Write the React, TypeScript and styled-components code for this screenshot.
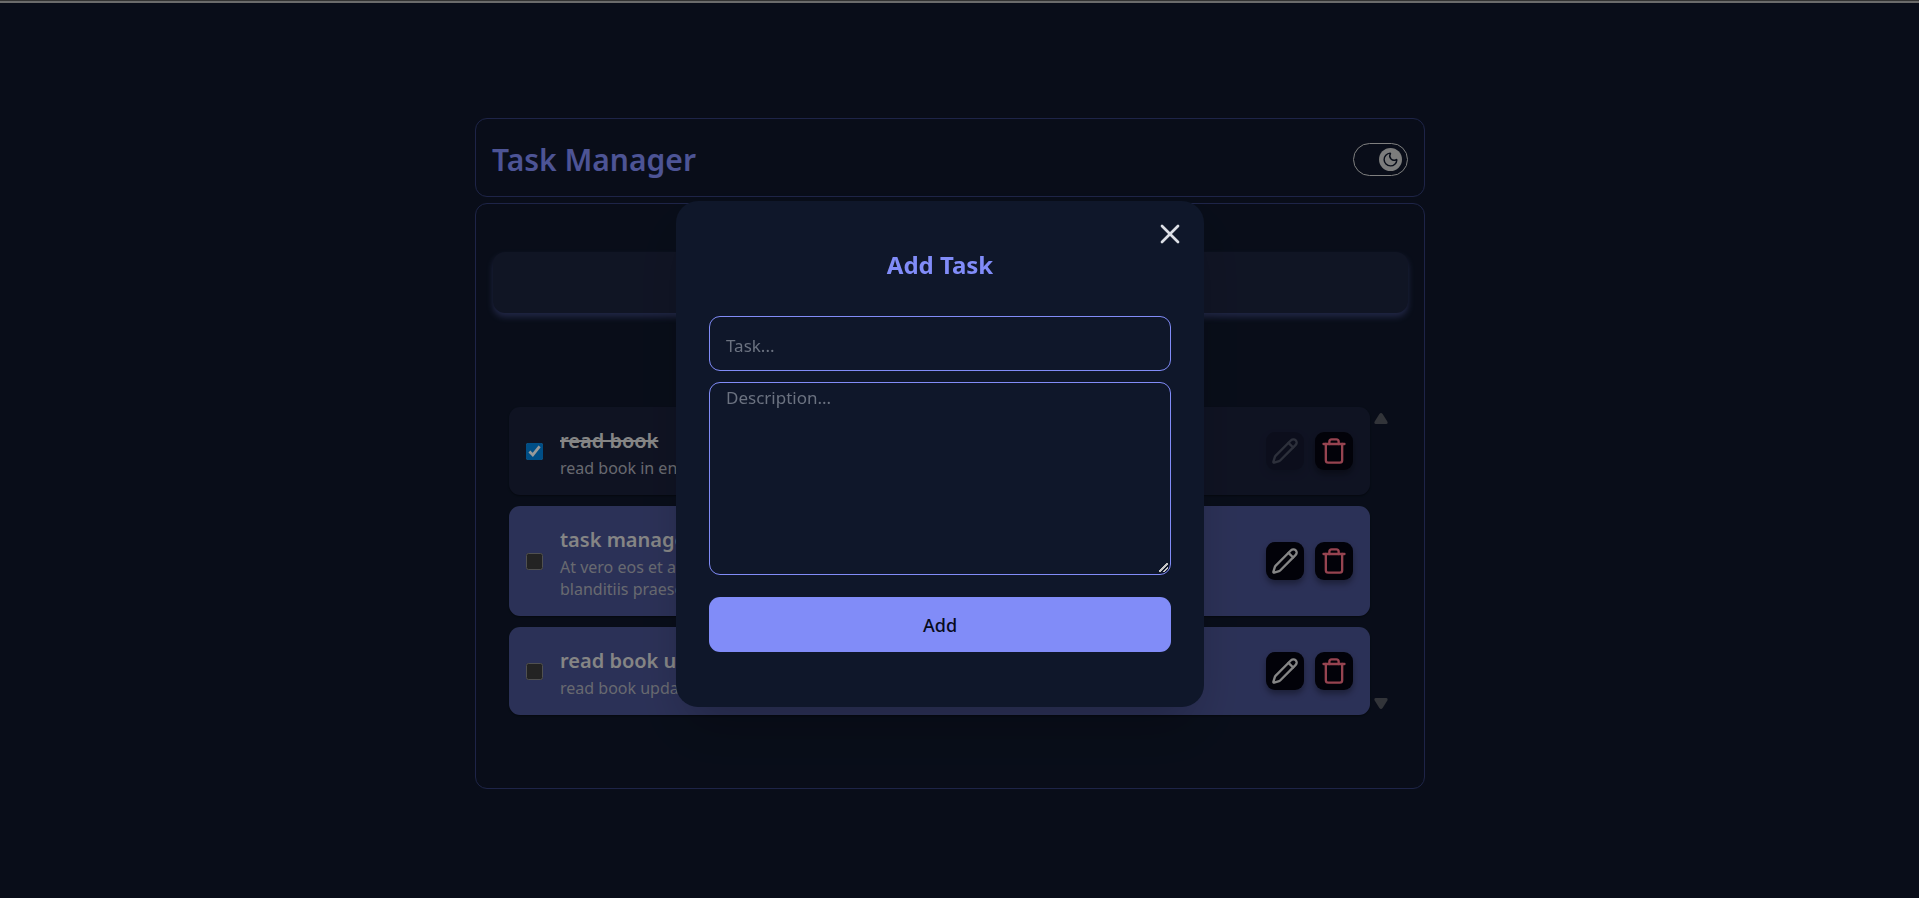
import React, { useState } from "react";
import styled, { createGlobalStyle } from "styled-components";
import { Moon, Pencil, Trash, X } from "lucide-react";

const GlobalStyle = createGlobalStyle`
  *, *::before, *::after { box-sizing: border-box; }
  html { color-scheme: dark; }
  body {
    margin: 0;
    background: #0f172a;
    color: #dedede;
    font-family: "Segoe UI", "Noto Sans", sans-serif;
    font-size: 16px;
  }
  h1, h2, h3, p, ul { margin: 0; padding: 0; }
  button, input, textarea { font: inherit; }
`;

const TopEdge = styled.div`
  position: fixed;
  inset: 0 0 auto;
  z-index: 3;
  height: 3px;
  border-top: 1px solid #333333;
  background: #6b6b6b;
`;

const Page = styled.main`
  min-height: 100vh;
  display: flex;
  flex-direction: column;
  align-items: center;
  justify-content: center;
  gap: 6px;
  padding: 9px 19px 0 0;
`;

const Frame = styled.div`
  width: 50%;
  min-width: 640px;
  border: 1px solid #333d78;
  border-radius: 12px;
`;

const Header = styled(Frame)`
  display: flex;
  align-items: center;
  justify-content: space-between;
  padding: 18px 16px 14px;
`;

const Heading = styled.h1`
  color: #818cf8;
  font-size: 30px;
  line-height: 45px;
  font-weight: 600;
`;

const ThemeToggle = styled.button`
  display: flex;
  align-items: center;
  justify-content: flex-end;
  width: 55px;
  height: 33px;
  padding: 0 5px;
  border: 1px solid #d4d4d4;
  border-radius: 17px;
  background: transparent;
`;

const Knob = styled.span`
  display: grid;
  place-items: center;
  width: 23px;
  height: 23px;
  border-radius: 50%;
  background: #cfcfcf;
  color: #0f172a;
`;

const Board = styled(Frame)`
  display: flex;
  flex-direction: column;
  gap: 94px;
  padding: 48px 16px 73px 17px;
`;

const NewTaskBar = styled.div`
  height: 61px;
  border-radius: 12px;
  background: #1c233d;
  box-shadow: 0 4px 6px 0 rgba(129, 140, 248, 0.35);
`;

const ListArea = styled.div`
  display: flex;
  gap: 4px;
  padding: 0 20px 0 16px;
`;

const List = styled.ul`
  flex: 1;
  display: flex;
  flex-direction: column;
  gap: 11px;
  list-style: none;
`;

const Card = styled.li<{ $done: boolean }>`
  display: flex;
  align-items: center;
  gap: 17px;
  padding: 0 17px;
  border-radius: 11px;
  background: ${(p) => (p.$done ? "#1a203a" : "#495291")};
  box-shadow: 0 1px 2px rgba(0, 0, 0, 0.4);
`;

const Tick = styled.input`
  width: 17px;
  height: 17px;
  margin: 0;
  accent-color: #0083e0;
`;

const TaskText = styled.label`
  flex: 1;
  padding: 20px 0 16px;
`;

const TaskTitle = styled.h3<{ $done: boolean }>`
  margin-bottom: 2px;
  font-size: 20px;
  line-height: 28px;
  font-weight: 600;
  text-decoration: ${(p) => (p.$done ? "line-through" : "none")};
`;

const TaskNote = styled.p`
  max-width: 500px;
  line-height: 22px;
  color: #adb0bb;
`;

const Actions = styled.div`
  display: flex;
  gap: 11px;
`;

const IconButton = styled.button<{ $danger?: boolean }>`
  display: grid;
  place-items: center;
  width: 38px;
  height: 38px;
  padding: 0;
  border: 0;
  border-radius: 9px;
  background: #04040f;
  color: ${(p) => (p.$danger ? "#fb7085" : "#dedede")};
  box-shadow: 0 4px 6px rgba(0, 0, 0, 0.35);

  &:disabled { opacity: 0.25; }
`;

const Scroller = styled.div`
  display: flex;
  flex-direction: column;
  justify-content: space-between;
  width: 14px;
  padding: 6px 0;
`;

const ScrollArrow = styled.button`
  display: block;
  height: 11px;
  padding: 0;
  border: 0;
  background: none;
  color: #54575f;

  svg { display: block; }
`;

const Overlay = styled.div`
  position: fixed;
  inset: 0;
  z-index: 2;
  display: flex;
  align-items: center;
  justify-content: center;
  padding: 10px 39px 0 0;
  background: rgba(0, 0, 0, 0.4);
`;

const Modal = styled.section`
  position: relative;
  width: 90%;
  max-width: 528px;
  padding: 48px 33px 55px;
  border-radius: 22px;
  background: #0f172a;
  box-shadow: 0 25px 50px -12px rgba(0, 0, 0, 0.25);
`;

const CloseButton = styled.button`
  position: absolute;
  top: 17px;
  right: 18px;
  display: grid;
  padding: 0;
  border: 0;
  background: none;
  color: #dcdfe6;
`;

const ModalTitle = styled.h2`
  margin-bottom: 35px;
  color: #818cf8;
  font-size: 24px;
  line-height: 32px;
  font-weight: 700;
  text-align: center;
`;

const Form = styled.form`
  display: flex;
  flex-direction: column;
`;

const TaskField = styled.input`
  height: 55px;
  margin-bottom: 11px;
  padding: 3px 16px 0;
  border: 1px solid #818cf8;
  border-radius: 11px;
  background: transparent;
  font-size: 17px;

  &::placeholder { color: #6b7280; }
`;

const DescriptionField = styled.textarea`
  height: 193px;
  margin-bottom: 22px;
  padding: 2px 16px;
  border: 1px solid #818cf8;
  border-radius: 11px;
  background: transparent;
  font-size: 17px;
  line-height: 26px;
  resize: vertical;

  &::placeholder { color: #6b7280; }

  &::-webkit-resizer {
    background: linear-gradient(
        135deg,
        transparent 44%,
        #c4c4c4 44% 58%,
        transparent 58% 70%,
        #c4c4c4 70% 82%,
        transparent 82%
      )
      right 2px bottom 2px / 9px 9px no-repeat;
  }
`;

const AddButton = styled.button`
  height: 55px;
  border: 0;
  border-radius: 11px;
  background: #818cf8;
  color: #070b1c;
  font-size: 18px;
  font-weight: 500;
`;

type Task = { title: string; note: string; done: boolean };

const initialTasks: Task[] = [
  { title: "read book", note: "read book in english", done: true },
  {
    title: "task manager",
    note: "At vero eos et accusamus et iusto odio dignissimos ducimus qui blanditiis praesentium voluptatum",
    done: false,
  },
  { title: "read book update", note: "read book update", done: false },
];

export default function App() {
  const [tasks, setTasks] = useState(initialTasks);
  const [open, setOpen] = useState(true);

  const toggle = (index: number) =>
    setTasks(tasks.map((t, i) => (i === index ? { ...t, done: !t.done } : t)));

  return (
    <>
      <GlobalStyle />
      <TopEdge />
      <Page>
        <Header as="header">
          <Heading>Task Manager</Heading>
          <ThemeToggle type="button" aria-label="Dark theme">
            <Knob>
              <Moon size={17} strokeWidth={2} />
            </Knob>
          </ThemeToggle>
        </Header>
        <Board>
          <NewTaskBar />
          <ListArea>
            <List>
              {tasks.map((task, i) => (
                <Card key={task.title} $done={task.done}>
                  <Tick
                    type="checkbox"
                    id={`task-${i}`}
                    checked={task.done}
                    onChange={() => toggle(i)}
                  />
                  <TaskText htmlFor={`task-${i}`}>
                    <TaskTitle $done={task.done}>{task.title}</TaskTitle>
                    <TaskNote>{task.note}</TaskNote>
                  </TaskText>
                  <Actions>
                    <IconButton type="button" aria-label="Edit task" disabled={task.done}>
                      <Pencil size={28} strokeWidth={2} />
                    </IconButton>
                    <IconButton type="button" aria-label="Delete task" $danger>
                      <Trash size={28} strokeWidth={2} />
                    </IconButton>
                  </Actions>
                </Card>
              ))}
            </List>
            <Scroller>
              <ScrollArrow type="button" aria-label="Scroll up">
                <svg width="14" height="11" viewBox="0 0 14 11">
                  <path d="M5.4 1.1Q7-.9 8.6 1.1L13.3 8.4Q14.3 11 12.2 11H1.8Q-.3 11 .7 8.4Z" fill="currentColor" />
                </svg>
              </ScrollArrow>
              <ScrollArrow type="button" aria-label="Scroll down">
                <svg width="14" height="11" viewBox="0 0 14 11">
                  <path d="M5.4 9.9Q7 11.9 8.6 9.9L13.3 2.6Q14.3 0 12.2 0H1.8Q-.3 0 .7 2.6Z" fill="currentColor" />
                </svg>
              </ScrollArrow>
            </Scroller>
          </ListArea>
        </Board>
      </Page>
      {open && (
        <Overlay>
          <Modal role="dialog" aria-modal="true" aria-labelledby="add-task-title">
            <CloseButton type="button" aria-label="Close" onClick={() => setOpen(false)}>
              <X size={32} />
            </CloseButton>
            <ModalTitle id="add-task-title">Add Task</ModalTitle>
            <Form onSubmit={(e) => e.preventDefault()}>
              <TaskField type="text" aria-label="Task" placeholder="Task..." />
              <DescriptionField aria-label="Description" placeholder="Description..." />
              <AddButton type="submit">Add</AddButton>
            </Form>
          </Modal>
        </Overlay>
      )}
    </>
  );
}
